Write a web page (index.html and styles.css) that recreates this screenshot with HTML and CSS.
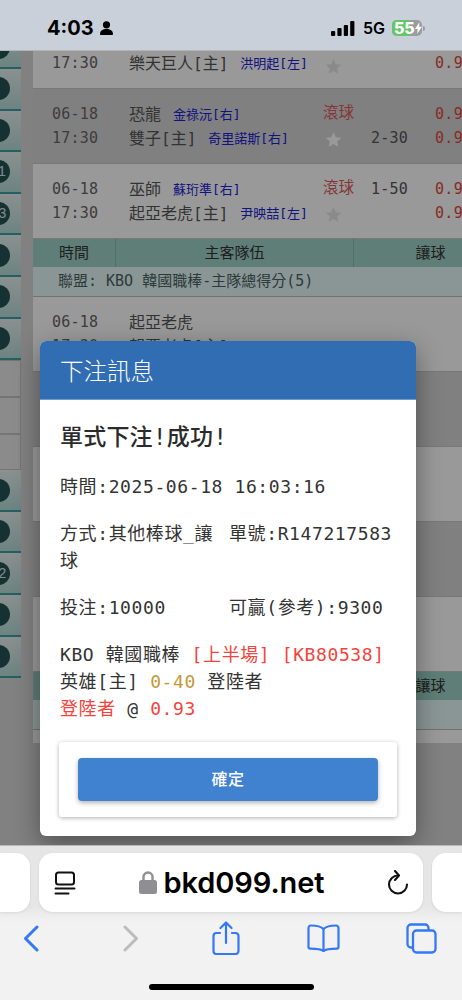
FILE: index.html
```html
<!DOCTYPE html>
<html lang="zh-Hant">
<head>
<meta charset="utf-8">
<title>下注訊息</title>
<link rel="stylesheet" href="styles.css">
</head>
<body>
<div class="phone">
  <header class="status">
    <div class="status-left">
      <span class="clock">4:03</span>
      <svg class="person" width="13" height="14" viewBox="0 0 13 14"><circle cx="6.5" cy="3.8" r="3.6" fill="#000"/><path d="M0 13.2c0-3.6 2.9-5.2 6.5-5.2s6.500 1.600 6.500 5.200c0 .5-.3.8-.8.8H.8c-.5 0-.8-.3-.8-.8z" fill="#000"/></svg>
    </div>
    <div class="status-right">
      <svg width="24" height="15" viewBox="0 0 24 15"><rect x="0" y="10" width="4.200" height="5" rx="1" fill="#000"/><rect x="6.400" y="7" width="4.200" height="8" rx="1" fill="#000"/><rect x="12.800" y="4" width="4.200" height="11" rx="1" fill="#000"/><rect x="19.200" y="0" width="4.200" height="15" rx="1" fill="#000"/></svg>
      <span class="net">5G</span>
      <div class="battery">
        <div class="battery-fill"></div>
        <span class="battery-text">55</span>
        <svg class="bolt" width="7" height="12" viewBox="0 0 8 13"><path d="M5 0 0 7.500h3L2.500 13 8 5.200H4.800z" fill="#fff"/></svg>
      </div>
      <div class="battery-cap"></div>
    </div>
  </header>

  <main class="viewport">
    <aside class="sidebar">
      <div class="side-item side-first"><span class="dot"></span></div>
      <div class="side-item"><span class="dot"></span></div>
      <div class="side-item"><span class="dot"></span></div>
      <div class="side-item"><span class="dot">11</span></div>
      <div class="side-item"><span class="dot">13</span></div>
      <div class="side-item"><span class="dot"></span></div>
      <div class="side-item"><span class="dot"></span></div>
      <div class="side-item"><span class="dot"></span></div>
      <div class="side-plain"></div>
      <div class="side-plain"></div>
      <div class="side-plain"></div>
      <div class="side-item"><span class="dot"></span></div>
      <div class="side-item"><span class="dot"></span></div>
      <div class="side-item"><span class="dot">12</span></div>
      <div class="side-item"><span class="dot"></span></div>
      <div class="side-item"><span class="dot"></span></div>
    </aside>

    <section class="content">
      <div class="row row-cut">
        <span class="time">17:30</span>
        <div class="team"><span>樂天巨人[主]</span><span class="pitcher">洪明起[左]</span></div>
        <svg class="star" width="17" height="17" viewBox="0 0 24 24"><path d="M12 1.500l3.200 7.200 7.800.8-5.900 5.200 1.700 7.700L12 18.400l-6.800 4 1.700-7.700L1 9.500l7.800-.8z"/></svg>
        <span></span>
        <span class="odds">0.93</span>
      </div>

      <div class="row row-dark">
        <span class="time">06-18</span>
        <div class="team"><span>恐龍</span><span class="pitcher">金祿沅[右]</span></div>
        <span class="live">滾球</span>
        <span></span>
        <span class="odds">0.93</span>
        <span class="time">17:30</span>
        <div class="team"><span>雙子[主]</span><span class="pitcher">奇里諾斯[右]</span></div>
        <svg class="star" width="17" height="17" viewBox="0 0 24 24"><path d="M12 1.500l3.200 7.200 7.800.8-5.900 5.200 1.700 7.700L12 18.400l-6.800 4 1.700-7.700L1 9.500l7.800-.8z"/></svg>
        <span class="hcap">2-30</span>
        <span class="odds">0.93</span>
      </div>

      <div class="row">
        <span class="time">06-18</span>
        <div class="team"><span>巫師</span><span class="pitcher">蘇珩準[右]</span></div>
        <span class="live">滾球</span>
        <span class="hcap">1-50</span>
        <span class="odds">0.93</span>
        <span class="time">17:30</span>
        <div class="team"><span>起亞老虎[主]</span><span class="pitcher">尹映喆[左]</span></div>
        <svg class="star" width="17" height="17" viewBox="0 0 24 24"><path d="M12 1.500l3.200 7.200 7.800.8-5.900 5.200 1.700 7.700L12 18.400l-6.800 4 1.700-7.700L1 9.500l7.800-.8z"/></svg>
        <span></span>
        <span class="odds">0.93</span>
      </div>

      <div class="thead"><span class="th th-time">時間</span><span class="th th-team">主客隊伍</span><span class="th th-hcap">讓球</span></div>
      <div class="league">聯盟: KBO 韓國職棒-主隊總得分(5)</div>

      <div class="row">
        <span class="time">06-18</span>
        <div class="team"><span>起亞老虎</span></div>
        <span></span><span></span><span></span>
        <span class="time">17:30</span>
        <div class="team"><span>起亞老虎[主]</span></div>
      </div>
      <div class="row row-dark"></div>
      <div class="row"></div>
      <div class="row row-dark"></div>
      <div class="row"></div>

      <div class="thead"><span class="th th-time"></span><span class="th th-team"></span><span class="th th-hcap">讓球</span></div>
      <div class="league"></div>
      <div class="tail"></div>
    </section>

    <div class="overlay"></div>

    <div class="modal">
      <div class="modal-head">下注訊息</div>
      <div class="modal-body">
        <h2 class="modal-title">單式下注!成功!</h2>
        <p class="line">時間:2025-06-18 16:03:16</p>
        <div class="pair"><span>方式:其他棒球_讓球</span><span>單號:R147217583</span></div>
        <div class="pair"><span>投注:10000</span><span>可贏(參考):9300</span></div>
        <p class="line">KBO 韓國職棒 <span class="red">[上半場] [KB80538]</span><br>英雄[主] <span class="gold">0-40</span> 登陸者<br><span class="red">登陸者</span> @ <span class="red">0.93</span></p>
        <div class="action-card"><button class="confirm" type="button">確定</button></div>
      </div>
    </div>
  </main>

  <footer class="browser">
    <div class="tabs-strip">
      <div class="pill pill-side pill-left"></div>
      <div class="pill pill-main">
        <svg width="22" height="24" viewBox="0 0 22 24" fill="none" stroke="#111" stroke-width="2" stroke-linecap="round"><rect x="2" y="1.500" width="18" height="12" rx="2.500"/><path d="M1.500 17.500h19M1.500 22.500h13"/></svg>
        <div class="address">
          <svg width="18" height="23" viewBox="0 0 18 23"><path d="M4.500 10V6a4.500 4.500 0 0 1 9 0v4" fill="none" stroke="#8e8e93" stroke-width="2.400"/><rect x="0" y="9" width="18" height="14" rx="2.500" fill="#8e8e93"/></svg>
          <span class="url">bkd099.net</span>
        </div>
        <svg width="22" height="25" viewBox="0 0 22 25" fill="none" stroke="#111" stroke-width="2.100" stroke-linecap="round" stroke-linejoin="round"><path d="M11 5.500a9 9 0 1 0 9 9"/><path d="M8 1l4 4.500L8 10"/></svg>
      </div>
      <div class="pill pill-side pill-right"></div>
    </div>
    <nav class="toolbar">
      <div class="tool"><svg width="16" height="27" viewBox="0 0 16 27" fill="none" stroke="#3478f6" stroke-width="3" stroke-linecap="round" stroke-linejoin="round"><path d="M14 2 2.500 13.500 14 25"/></svg></div>
      <div class="tool tool-forward"><svg width="16" height="27" viewBox="0 0 16 27" fill="none" stroke="#bcbcbc" stroke-width="3" stroke-linecap="round" stroke-linejoin="round"><path d="M2 2l11.500 11.500L2 25"/></svg></div>
      <div class="tool"><svg width="28" height="34" viewBox="0 0 28 34" fill="none" stroke="#3478f6" stroke-width="2.200" stroke-linecap="round" stroke-linejoin="round"><path d="M8 12H4.500A3 3 0 0 0 1.500 15v15a3 3 0 0 0 3 3h19a3 3 0 0 0 3-3V15a3 3 0 0 0-3-3H20"/><path d="M14 22V2M8.500 7 14 1.500 19.500 7"/></svg></div>
      <div class="tool"><svg width="33" height="28" viewBox="0 0 33 28" fill="none" stroke="#3478f6" stroke-width="2.200" stroke-linecap="round" stroke-linejoin="round"><path d="M16.500 5C14 2.500 10 1.500 4 1.500 2.500 1.500 1.500 2.500 1.500 4v19c0 1 .7 1.700 1.700 1.700 6.800 0 10.800.2 13.300 2.300 2.500-2.100 6.500-2.300 13.300-2.300 1 0 1.700-.7 1.700-1.700V4c0-1.500-1-2.500-2.500-2.500-6 0-10 1-12.500 3.500z"/><path d="M16.500 5v22"/></svg></div>
      <div class="tool"><svg width="31" height="31" viewBox="0 0 31 31" fill="none" stroke="#3478f6" stroke-width="2.300" stroke-linejoin="round"><path d="M7 24.500H5A3.500 3.500 0 0 1 1.500 21V5A3.500 3.500 0 0 1 5 1.500h14A3.500 3.500 0 0 1 22.500 5v2"/><rect x="7" y="7.500" width="22.500" height="22" rx="3.500"/></svg></div>
    </nav>
    <div class="home-indicator"></div>
  </footer>
</div>
</body>
</html>
```
FILE: styles.css
```css
* { box-sizing: border-box; }
html, body { margin: 0; padding: 0; }
body { width: 462px; height: 1000px; overflow: hidden; background: #f2f2f2; }

.phone {
  width: 462px;
  height: 1000px;
  display: flex;
  flex-direction: column;
  font-family: "DejaVu Sans Mono", "Noto Sans CJK TC", monospace;
  color: #555;
}

/* iOS status bar */
.status {
  height: 51px;
  flex: none;
  background: #c9d0d9;
  border-bottom: 1px solid #b4b4b4;
  display: flex;
  justify-content: space-between;
  align-items: flex-start;
  padding: 16px 37px 0 47px;
  font-family: Inter, "Liberation Sans", sans-serif;
  color: #000;
}
.status-left { display: flex; align-items: center; gap: 6px; }
.clock { font-size: 20px; font-weight: 700; line-height: 24px; }
.status-right { display: flex; align-items: center; height: 24px; }
.net { font-size: 16px; font-weight: 600; margin: 0 7px 0 8px; }
.battery {
  position: relative;
  width: 30px;
  height: 16px;
  border-radius: 5px;
  background: #9a9ca1;
  overflow: hidden;
  display: flex;
  align-items: center;
  padding-left: 2px;
}
.battery-fill { position: absolute; left: 0; top: 0; bottom: 0; width: 18px; background: #63c766; }
.battery-text { position: relative; font-size: 16px; font-weight: 800; line-height: 16px; letter-spacing: -.3px; color: #fff; }
.bolt { position: relative; margin-left: 1px; flex: none; }
.battery-cap { width: 2px; height: 5px; margin-left: 1px; border-radius: 0 2px 2px 0; background: #9a9ca1; }

/* page behind the dialog */
.viewport {
  position: relative;
  height: 794px;
  flex: none;
  display: flex;
  overflow: hidden;
  background: #d8d8d8;
}
.sidebar { width: 33px; flex: none; padding-right: 12px; }
.side-item {
  height: 41.6px;
  display: flex;
  align-items: center;
  background: linear-gradient(#e6f1ef, #b5dcd8);
  border-bottom: 2.500px solid #3f9ea0;
  overflow: hidden;
}
.side-first { margin-top: -23.600px; }
.dot {
  width: 23px;
  height: 23px;
  margin-left: -13px;
  flex: none;
  border-radius: 50%;
  background: #265252;
  color: #d8e8e8;
  font-size: 14px;
  line-height: 23px;
  text-align: center;
  font-family: "Liberation Sans", sans-serif;
}
.side-plain { height: 36.700px; background: #e8e8e8; border: 1px solid #c4c4c4; border-left: 0; }

.content { flex: 1; min-width: 0; overflow: hidden; }
.row {
  height: 75px;
  padding: 13px 0 0 19px;
  display: grid;
  grid-template-columns: 77px 194px 48px 64px 60px;
  grid-auto-rows: 24px;
  align-items: center;
  background: #fff;
  border-bottom: 1.500px solid #c8c8c8;
  font-size: 15px;
  white-space: nowrap;
}
.row-dark { background: #d6d6d6; }
.row-cut { height: 38px; padding-top: 0; }
.time { letter-spacing: .2px; color: #666; }
.team { display: flex; align-items: center; gap: 12px; margin-bottom: 2px; font-size: 16px; color: #555; }
.pitcher { font-size: 13px; color: #2020d4; }
.live { margin-bottom: 6px; font-size: 15.500px; color: #dc5a5a; }
.hcap { color: #555; letter-spacing: .2px; }
.odds { color: #e04a40; letter-spacing: .3px; }
.star { fill: #e6e6e6; margin: 3px 0 0 2px; }
.row-cut .star { margin-top: 6px; }
.row-dark .star { fill: #fff; }

.thead {
  height: 28px;
  display: flex;
  background: #9fd2c9;
  font-size: 15px;
  line-height: 28px;
  color: #333;
}
.th { text-align: center; border-right: 1px solid #8cbab2; }
.th-time { width: 83px; }
.th-team { width: 238px; }
.th-hcap { flex: 1; border-right: 0; padding-left: 45px; }
.league {
  height: 30px;
  padding-left: 25px;
  background: #e6fbf8;
  border-bottom: 1.500px solid #bdbdbd;
  font-size: 15px;
  line-height: 29px;
  color: #4a6262;
  white-space: nowrap;
}
.tail { height: 13px; background: #fff; }

.overlay { position: absolute; inset: 0; background: rgba(0, 0, 0, .4); }

/* dialog */
.modal {
  position: absolute;
  left: 40px;
  top: 290px;
  width: 376px;
  height: 495px;
  border-radius: 6px;
  background: #fff;
  overflow: hidden;
  box-shadow: 0 8px 26px rgba(0, 0, 0, .38);
  color: #333;
}
.modal-head {
  height: 59px;
  padding-left: 20px;
  background: #316db3;
  border-bottom: 1px solid #6f9bd0;
  color: #fff;
  font-family: "Noto Sans CJK TC", sans-serif;
  font-weight: 300;
  font-size: 23.500px;
  line-height: 58px;
}
.modal-body { padding: 18px 20px 20px; font-size: 18px; line-height: 27px; letter-spacing: .6px; }
.modal-title { margin: 0 0 17px; font-size: 23px; line-height: 38px; font-weight: 500; letter-spacing: .2px; color: #2b2b2b; }
.line { margin: 0 0 20px; }
.pair { display: grid; grid-template-columns: 169px 1fr; margin-bottom: 20px; white-space: normal; }
.pair span:last-child { white-space: nowrap; }
.red { color: #f5433b; }
.gold { color: #c49a38; }
.action-card {
  margin: 19px -1px 0;
  height: 75px;
  padding: 16px 19px;
  border-radius: 3px;
  background: #fff;
  box-shadow: 0 1px 4px rgba(0, 0, 0, .32);
}
.confirm {
  display: block;
  width: 100%;
  height: 43px;
  padding: 0 0 3px;
  border: 0;
  border-radius: 4px;
  background: #4182d0;
  box-shadow: 0 2px 5px rgba(0, 0, 0, .3);
  color: #fff;
  font-family: "Noto Sans CJK TC", sans-serif;
  font-size: 16px;
  font-weight: 500;
  letter-spacing: .5px;
}

/* Safari bottom bar */
.browser {
  flex: 1;
  background: linear-gradient(#e6e6e6 0, #e6e6e6 60px, #f2f2f2 76px);
  border-top: 1px solid #b8b8b8;
  display: flex;
  flex-direction: column;
}
.tabs-strip { display: flex; gap: 9px; padding-top: 7px; }
.pill { height: 59px; background: #fff; box-shadow: 0 1px 3px rgba(0, 0, 0, .08); }
.pill-side { width: 30px; flex: none; }
.pill-left { border-radius: 0 14px 14px 0; }
.pill-right { flex: 1; border-radius: 14px 0 0 14px; }
.pill-main {
  width: 384px;
  flex: none;
  border-radius: 14px;
  display: flex;
  align-items: center;
  justify-content: space-between;
  padding: 0 14px 0 15px;
}
.address { display: flex; align-items: center; gap: 7px; }
.url { font-family: Inter, "Liberation Sans", sans-serif; font-size: 29px; font-weight: 600; color: #000; line-height: 36px; letter-spacing: -.1px; }
.toolbar {
  display: flex;
  justify-content: space-between;
  align-items: center;
  height: 46px;
  margin-top: 3px;
  padding: 0 21px 0 11px;
}
.tool { width: 40px; display: flex; justify-content: center; }
.tool-forward { padding-left: 5px; }
.home-indicator { width: 165px; height: 6px; margin: 23px auto 0 149px; border-radius: 3px; background: #000; }
```
